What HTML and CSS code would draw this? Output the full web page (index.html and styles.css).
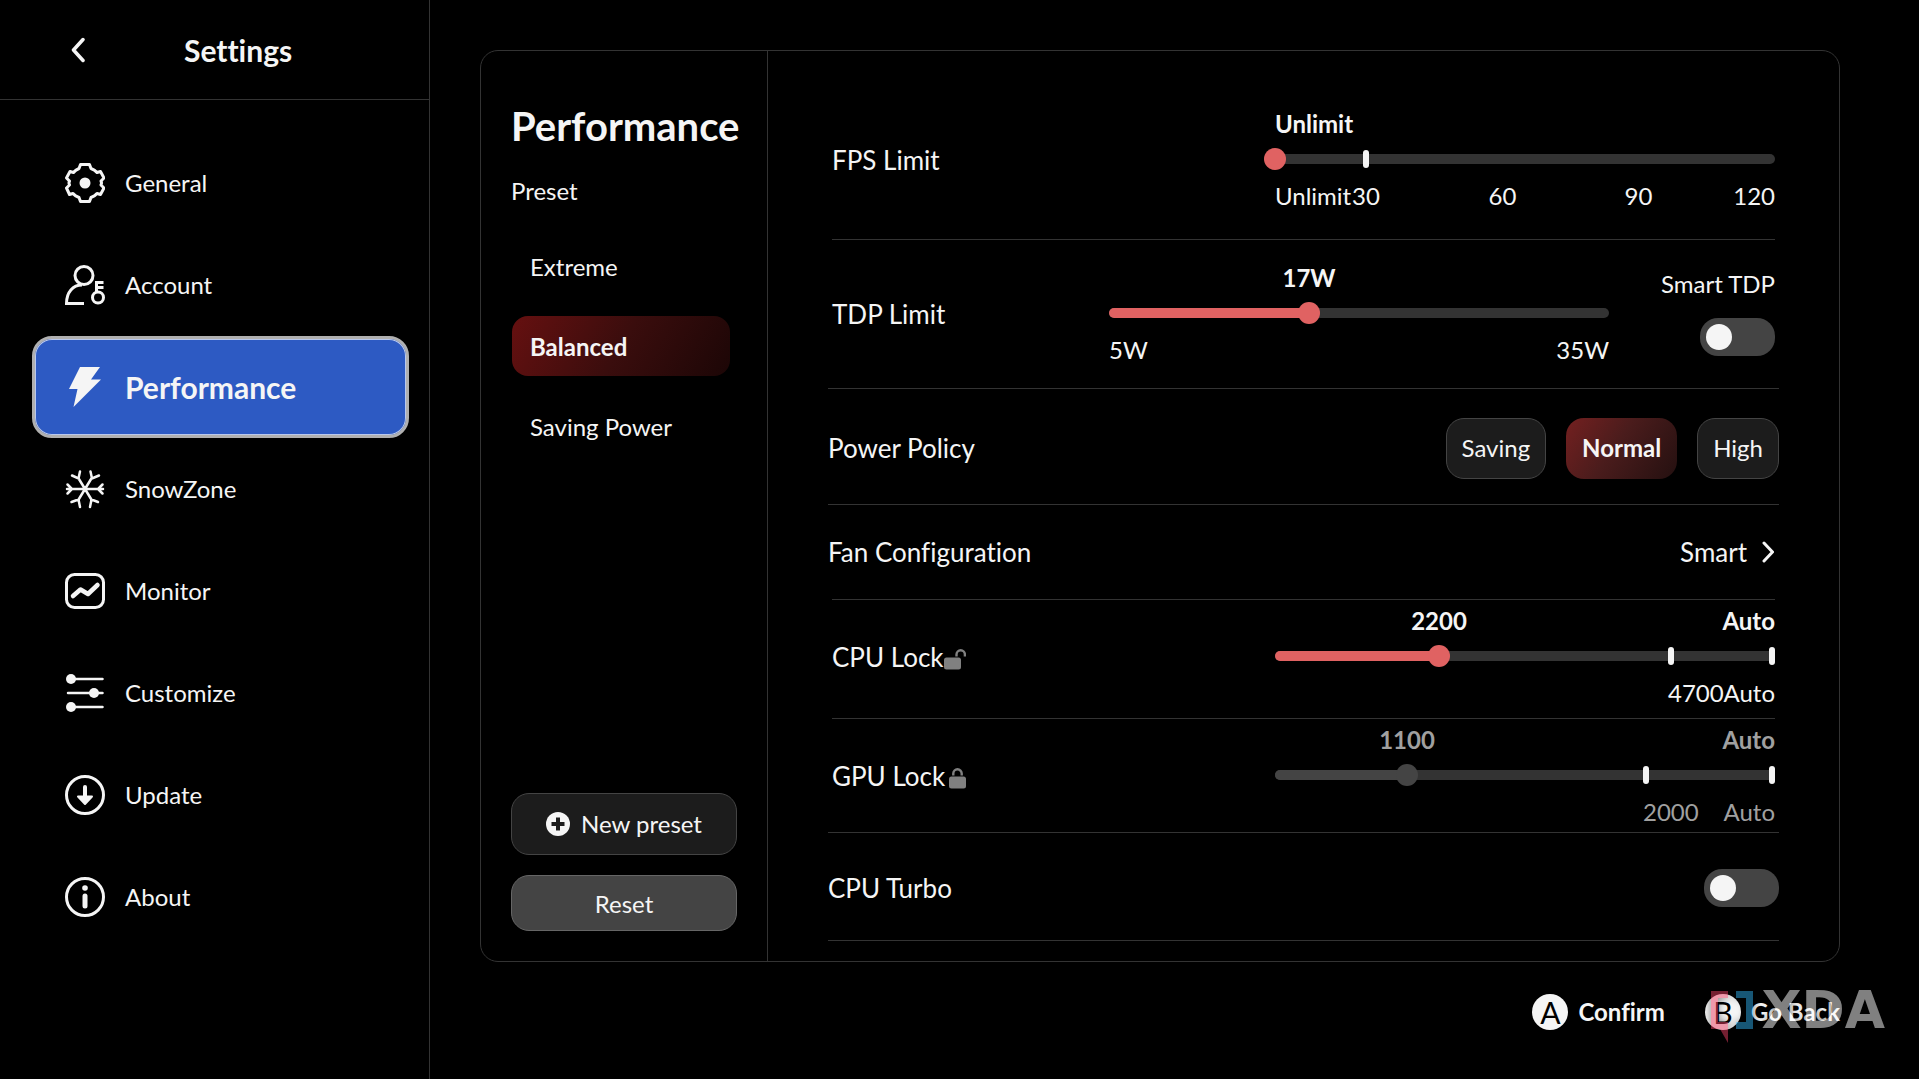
FILE: index.html
```html
<!DOCTYPE html>
<html lang="en">
<head>
<meta charset="utf-8">
<title>Settings</title>
<link rel="stylesheet" href="styles.css">
</head>
<body>
<div class="app">
  <aside class="sidebar">
    <header class="sidebar-header">
      <button class="back" type="button" aria-label="Back">
        <svg width="14" height="26" viewBox="0 0 14 26" fill="none" stroke="currentColor" stroke-width="3.500" stroke-linecap="round" stroke-linejoin="round"><path d="M12 2.500 2.500 13 12 23.500"/></svg>
      </button>
      <h1 class="sidebar-title">Settings</h1>
    </header>
    <nav class="nav">
      <a class="nav-item" href="#general">
        <svg class="nav-icon" viewBox="0 0 40 40" fill="none" stroke="currentColor" stroke-width="3" stroke-linejoin="round"><path d="M15.500 1.500h9l1.500 4q4 1.500 6 4l3.500-1 3.500 6.500-3 3q1 2 0 4l3 3-3.500 6.500-3.500-1q-2 2.500-6 4l-1.500 4h-9l-1.500-4q-4-1.500-6-4l-3.500 1L1.500 25l3-3q-1-2 0-4l-3-3L5 8.500l3.500 1q2-2.500 5.500-4z"/><circle cx="20" cy="20" r="5.500" fill="currentColor" stroke="none"/></svg>
        <span>General</span>
      </a>
      <a class="nav-item" href="#account">
        <svg class="nav-icon" viewBox="0 0 40 40" fill="none" stroke="currentColor" stroke-width="3"><circle cx="19" cy="10.500" r="9"/><path d="M19 38.500H1.500C1.500 27 8 20 17 20"/><circle cx="33" cy="32.500" r="5.500"/><path d="M31.500 27V17.500h7M31.500 22.500h7"/></svg>
        <span>Account</span>
      </a>
      <a class="nav-item nav-item-active" href="#performance" aria-current="page">
        <svg class="nav-icon" viewBox="0 0 40 40" fill="currentColor"><path d="M15 0h20l-9 12.500h10L8.500 40l4-18H4z"/></svg>
        <span>Performance</span>
      </a>
      <a class="nav-item" href="#snowzone">
        <svg class="nav-icon" viewBox="0 0 40 40" fill="none" stroke="currentColor" stroke-width="2.500" stroke-linecap="round"><path d="M2 20h36M13 8.500l14 23M27 8.500l-14 23M2.500 15.500l4.500 4.500-4.500 4.500M37.500 15.500l-4.500 4.500 4.500 4.500M7 6.500l6.500 3L15 2.500M34 6.500l-7 3L25.500 2.500M6.500 33l7-2.500 1.500 7.500M33 33l-6.500-2.500-1.500 7.500"/></svg>
        <span>SnowZone</span>
      </a>
      <a class="nav-item" href="#monitor">
        <svg class="nav-icon" viewBox="0 0 40 40" fill="none" stroke="currentColor" stroke-width="3" stroke-linecap="round" stroke-linejoin="round"><rect x="1.500" y="3.500" width="37" height="33" rx="8"/><path stroke-width="4.500" d="M8 25l7.500-6.500L23 23l9.500-9"/></svg>
        <span>Monitor</span>
      </a>
      <a class="nav-item" href="#customize">
        <svg class="nav-icon" viewBox="0 0 40 40" fill="currentColor" stroke="currentColor" stroke-width="2.500" stroke-linecap="round"><path d="M6 6h31.500M3 20h34.500M6 34h31.500"/><g stroke="none"><circle cx="6" cy="6" r="5"/><circle cx="29" cy="20" r="5"/><circle cx="6" cy="34" r="5"/></g></svg>
        <span>Customize</span>
      </a>
      <a class="nav-item" href="#update">
        <svg class="nav-icon" viewBox="0 0 40 40" fill="none" stroke="currentColor" stroke-width="3" stroke-linecap="round" stroke-linejoin="round"><circle cx="20" cy="20" r="18.500"/><path stroke-width="4" d="M20 12v10"/><path fill="currentColor" stroke-width="2" d="M13 21.500h14L20 29z"/></svg>
        <span>Update</span>
      </a>
      <a class="nav-item" href="#about">
        <svg class="nav-icon" viewBox="0 0 40 40" fill="none" stroke="currentColor" stroke-width="3" stroke-linecap="round"><circle cx="20" cy="20" r="18.500"/><circle cx="20" cy="11" r="2.800" fill="currentColor" stroke="none"/><path stroke-width="5" d="M20 19v10"/></svg>
        <span>About</span>
      </a>
    </nav>
  </aside>

  <div class="content">
    <main class="panel">
      <section class="presets">
        <h2 class="presets-title">Performance</h2>
        <p class="presets-label">Preset</p>
        <div class="preset-list">
          <button class="preset" type="button">Extreme</button>
          <button class="preset preset-active" type="button" aria-pressed="true">Balanced</button>
          <button class="preset" type="button">Saving Power</button>
        </div>
        <div class="preset-actions">
          <button class="action" type="button">
            <svg width="24" height="24" viewBox="0 0 24 24"><circle cx="12" cy="12" r="12" fill="#f5f5f5"/><path d="M12 5.500v13M5.500 12h13" stroke="#1c1c1c" stroke-width="4"/></svg>
            New preset
          </button>
          <button class="action action-reset" type="button">Reset</button>
        </div>
      </section>

      <section class="options">
        <div class="row row-inset row-fps">
          <label class="row-label" for="fps">FPS Limit</label>
          <div class="slider">
            <div class="slider-line slider-value"><span>Unlimit</span></div>
            <div class="slider-track">
              <span class="tick" style="left:18.200%"></span>
              <input class="range" id="fps" type="range" min="0" max="120" value="0">
            </div>
            <div class="slider-line">
              <span>Unlimit</span>
              <span class="mark" style="left:18.200%">30</span>
              <span class="mark" style="left:45.500%">60</span>
              <span class="mark" style="left:72.700%">90</span>
              <span class="line-end">120</span>
            </div>
          </div>
        </div>

        <div class="row row-wide-line row-tdp">
          <label class="row-label" for="tdp">TDP Limit</label>
          <div class="slider">
            <div class="slider-line slider-value"><span class="mark" style="left:40%">17W</span></div>
            <div class="slider-track">
              <span class="fill" style="width:40%"></span>
              <input class="range" id="tdp" type="range" min="5" max="35" value="17">
            </div>
            <div class="slider-line"><span>5W</span><span class="line-end">35W</span></div>
          </div>
          <div class="smart">
            <label for="smart-tdp">Smart TDP</label>
            <input class="toggle" id="smart-tdp" type="checkbox" role="switch">
          </div>
        </div>

        <div class="row row-power">
          <span class="row-label">Power Policy</span>
          <div class="policy">
            <button class="chip" type="button">Saving</button>
            <button class="chip chip-active" type="button" aria-pressed="true">Normal</button>
            <button class="chip" type="button">High</button>
          </div>
        </div>

        <div class="row row-inset-line row-fan">
          <span class="row-label">Fan Configuration</span>
          <button class="link-button" type="button">Smart
            <svg width="12" height="22" viewBox="0 0 12 22" fill="none" stroke="currentColor" stroke-width="3" stroke-linecap="round" stroke-linejoin="round"><path d="M2 2l8.500 9L2 20"/></svg>
          </button>
        </div>

        <div class="row row-inset row-cpu">
          <label class="row-label" for="cpu">CPU Lock
            <svg class="lock" width="22" height="22" viewBox="0 0 22 22"><rect x="0" y="9.500" width="17" height="12" rx="2.500" fill="#808080"/><path d="M12.500 8.500V6.500a4.200 4.200 0 0 1 8.400 0v2" fill="none" stroke="#808080" stroke-width="2.400"/></svg></label>
          <div class="slider">
            <div class="slider-line slider-value"><span class="mark" style="left:32.800%">2200</span><span class="line-end">Auto</span></div>
            <div class="slider-track">
              <span class="fill" style="width:32.800%"></span>
              <span class="tick" style="left:79.200%"></span>
              <span class="tick tick-end"></span>
              <input class="range" id="cpu" type="range" min="0" max="1000" value="328">
            </div>
            <div class="slider-line"><span class="mark-start" style="left:78.600%">4700</span><span class="line-end">Auto</span></div>
          </div>
        </div>

        <div class="row row-wide-line row-gpu">
          <label class="row-label" for="gpu">GPU Lock
            <svg class="lock" width="22" height="22" viewBox="0 0 22 22"><rect x="3" y="9.500" width="17" height="12" rx="2.500" fill="#808080"/><path d="M7.300 8.500V6.500a4.200 4.200 0 0 1 8.400 0v2" fill="none" stroke="#808080" stroke-width="2.400"/></svg></label>
          <div class="slider slider-off">
            <div class="slider-line slider-value"><span class="mark" style="left:26.400%">1100</span><span class="line-end">Auto</span></div>
            <div class="slider-track">
              <span class="fill" style="width:26.400%"></span>
              <span class="tick" style="left:74.200%"></span>
              <span class="tick tick-end"></span>
              <input class="range" id="gpu" type="range" min="0" max="1000" value="264" disabled>
            </div>
            <div class="slider-line"><span class="mark-start" style="left:73.600%">2000</span><span class="line-end">Auto</span></div>
          </div>
        </div>

        <div class="row row-turbo">
          <label class="row-label" for="turbo">CPU Turbo</label>
          <input class="toggle" id="turbo" type="checkbox" role="switch">
        </div>
      </section>
    </main>

    <footer class="hints">
      <button class="hint" type="button"><span class="key">A</span>Confirm</button>
      <button class="hint" type="button"><span class="key">B</span>Go Back</button>
    </footer>
  </div>

  <div class="watermark">
    <svg width="42" height="52" viewBox="0 0 42 52"><path d="M0 0h17v7H7v24h10v21L9 38H0z" fill="#e83e63"/><path d="M25 0h17v38H25v-7h10V7H25z" fill="#2fabea"/></svg>
    <span>XDA</span>
  </div>
</div>
</body>
</html>
```

FILE: styles.css
```css
* { box-sizing: border-box; }

body {
  margin: 0;
  background: #000;
  color: #f5f5f5;
  font-family: Lato, "Liberation Sans", sans-serif;
  font-size: 24px;
  line-height: 30px;
  font-variant-ligatures: none;
}

h1, h2, p { margin: 0; }

button {
  font: inherit;
  font-variant-ligatures: inherit;
  color: inherit;
  background: none;
  border: 0;
  padding: 0;
}

.app {
  display: flex;
  min-height: 100vh;
  position: relative;
}

/* Sidebar */
.sidebar {
  width: 430px;
  flex: none;
  border-right: 1px solid #333;
}
.sidebar-header {
  display: flex;
  align-items: center;
  height: 100px;
  padding-left: 71px;
  gap: 99px;
  border-bottom: 1px solid #333;
}
.back svg { display: block; }
.sidebar-title {
  font-size: 30px;
  line-height: 36px;
  font-weight: 700;
}
.nav {
  display: flex;
  flex-direction: column;
  padding: 32px 20px 0 32px;
}
.nav-item {
  display: flex;
  align-items: center;
  gap: 20px;
  height: 102px;
  padding-left: 33px;
  color: inherit;
  text-decoration: none;
}
.nav-icon { width: 40px; height: 40px; flex: none; }
.nav-item-active {
  border: 3px solid #b0b0b0;
  border-radius: 20px;
  padding-left: 30px;
  background: #2d5ac3;
  box-shadow: inset 0 0 0 1px #b9c8ee;
  font-size: 30px;
  font-weight: 700;
}

/* Main panel */
.content {
  flex: 1;
  padding: 50px 79px 0 50px;
}
.panel {
  display: flex;
  border: 1px solid #333;
  border-radius: 18px;
}
.presets {
  display: flex;
  flex-direction: column;
  width: 287px;
  flex: none;
  padding: 50px 30px 30px;
  border-right: 1px solid #333;
}
.presets-title {
  font-size: 40px;
  line-height: 50px;
  font-weight: 700;
}
.presets-label { margin-top: 25px; }
.preset-list {
  display: flex;
  flex-direction: column;
  gap: 20px;
  height: 204px;
  margin: 30px 7px 0 1px;
  overflow: hidden;
}
.preset {
  flex: none;
  height: 60px;
  padding: 2px 0 0 18px;
  border-radius: 16px;
  text-align: left;
}
.preset-active {
  background: linear-gradient(120deg, #661010, #3a0d0d 50%, #1c0606);
  font-weight: 700;
}
.preset-actions {
  display: flex;
  flex-direction: column;
  gap: 20px;
  margin-top: auto;
}
.action {
  display: flex;
  align-items: center;
  justify-content: center;
  gap: 11px;
  height: 62px;
  border: 1px solid #444;
  border-radius: 18px;
  background: #1c1c1c;
}
.action-reset {
  height: 56px;
  padding-top: 2px;
  border-color: #666;
  background: #444;
}

/* Option rows */
.options {
  flex: 1;
  padding: 29px 60px 20px;
}
.row {
  display: flex;
  align-items: center;
  justify-content: space-between;
  border-bottom: 1px solid #333;
}
.row-label {
  font-size: 26px;
  line-height: 32px;
}
.row-inset, .row-inset-line { margin: 0 4px; }
.row-wide-line { padding: 0 4px; }
.row-inset-line .row-label { margin-left: -4px; }
.row-fps { height: 160px; }
.row-tdp { height: 149px; }
.row-power { height: 116px; padding-top: 3px; }
.row-fan { height: 95px; }
.row-cpu { height: 119px; padding-bottom: 5px; }
.row-gpu { height: 114px; }
.row-turbo { height: 108px; padding-top: 3px; }
.lock { margin-left: -6px; vertical-align: -3px; }

/* Sliders */
.slider {
  display: flex;
  flex-direction: column;
  gap: 10px;
  width: 500px;
}
.slider-line {
  display: flex;
  position: relative;
  height: 30px;
}
.slider-value { font-weight: 700; }
.line-end { margin-left: auto; }
.mark {
  position: absolute;
  transform: translateX(-50%);
}
.mark-start { position: absolute; }
.slider-track {
  position: relative;
  height: 10px;
  margin: 5px 0 7px;
  border-radius: 5px;
  background: #333;
}
.fill {
  display: block;
  height: 10px;
  border-radius: 5px;
  background: #e06262;
}
.tick {
  position: absolute;
  top: -4px;
  width: 6px;
  height: 18px;
  margin-left: -3px;
  border-radius: 3px;
  background: #f5f5f5;
}
.tick-end { right: 0; }
.range {
  position: absolute;
  left: -11px;
  top: -6px;
  width: calc(100% + 22px);
  height: 22px;
  margin: 0;
  appearance: none;
  background: none;
}
.range::-webkit-slider-thumb {
  appearance: none;
  width: 22px;
  height: 22px;
  border-radius: 50%;
  background: #e06262;
}
.slider-off { color: #a0a0a0; }
.slider-off .fill { background: #444; }
.slider-off .range::-webkit-slider-thumb { background: #444; }

.row-tdp .slider { margin-left: auto; }
.smart {
  display: flex;
  flex-direction: column;
  align-items: flex-end;
  gap: 19px;
  width: 166px;
  padding-bottom: 3px;
}
.toggle {
  appearance: none;
  width: 75px;
  height: 38px;
  margin: 0;
  padding: 6px;
  border-radius: 18px;
  background: #444;
}
.toggle::before {
  content: "";
  display: block;
  width: 26px;
  height: 26px;
  border-radius: 50%;
  background: #f5f5f5;
}

.policy { display: flex; gap: 20px; }
.chip {
  height: 61px;
  padding: 0 15px;
  border: 1px solid #444;
  border-radius: 18px;
  background: #1c1c1c;
}
.chip-active {
  padding: 0 16px;
  border: 0;
  background: linear-gradient(125deg, #742020, #4a1c1c 45%, #241010);
  font-weight: 700;
}
.link-button {
  display: flex;
  align-items: center;
  gap: 15px;
  padding-right: 1px;
  font-size: 26px;
}

/* Controller hints */
.hints {
  display: flex;
  justify-content: flex-end;
  gap: 40px;
  padding-top: 32px;
}
.hint {
  display: flex;
  align-items: center;
  gap: 10px;
  font-weight: 700;
}
.key {
  width: 36px;
  height: 36px;
  border-radius: 50%;
  background: #f5f5f5;
  color: #000;
  font-size: 30px;
  font-weight: 400;
  line-height: 36px;
}

.watermark {
  position: absolute;
  right: 34px;
  bottom: 36px;
  display: flex;
  gap: 9px;
  opacity: 0.5;
  filter: drop-shadow(0 0 4px #000);
  color: #fff;
  font: 700 52px/38px "DejaVu Sans", sans-serif;
  pointer-events: none;
}
```
